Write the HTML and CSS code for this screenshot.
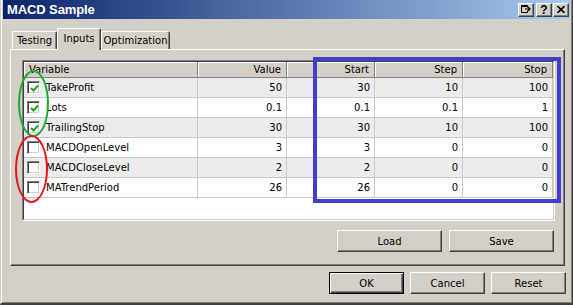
FILE: index.html
```html
<!DOCTYPE html>
<html>
<head>
<meta charset="utf-8">
<title>MACD Sample</title>
<link rel="stylesheet" href="styles.css">
</head>
<body>
<div class="window">
  <div class="titlebar">
    <span class="title">MACD Sample</span>
    <div class="tb-buttons">
      <div class="tb-btn">
        <svg width="10" height="9" viewBox="0 0 10 9"><path d="M0.5 1.5 H6.5 M0.5 0.5 H6.5 M0.5 0.5 V7.5 H6.5 V5.5 M6.5 0.5 V2.5" fill="none" stroke="#000" stroke-width="1"/><path d="M4 4 H8 M7 2 L9 4 L7 6" fill="none" stroke="#000" stroke-width="1.2"/></svg>
      </div>
      <div class="tb-btn help">?</div>
      <div class="tb-btn">
        <svg width="8" height="7" viewBox="0 0 8 7"><path d="M0.5 0 L7.5 7 M7.5 0 L0.5 7" stroke="#000" stroke-width="1.6"/></svg>
      </div>
    </div>
  </div>
  <div class="client">
    <div class="tabs">
      <div class="tab t-testing">Testing</div>
      <div class="tab t-inputs active">Inputs</div>
      <div class="tab t-opt">Optimization</div>
    </div>
    <div class="panel">
      <div class="list">
        <div class="list-inner">
          <div class="row header">
            <div class="cell hc left">Variable</div>
            <div class="cell hc">Value</div>
            <div class="cell hc">Start</div>
            <div class="cell hc">Step</div>
            <div class="cell hc last">Stop</div>
          </div>
          <div class="row odd">
            <div class="cell left"><span class="cb checked"><svg width="9" height="9" viewBox="0 0 9 9"><path d="M1 4 L3.5 6.5 L8 1.5" fill="none" stroke="#21a021" stroke-width="2"/></svg></span>TakeProfit</div>
            <div class="cell">50</div><div class="cell">30</div><div class="cell">10</div><div class="cell last">100</div>
          </div>
          <div class="row">
            <div class="cell left"><span class="cb checked"><svg width="9" height="9" viewBox="0 0 9 9"><path d="M1 4 L3.5 6.5 L8 1.5" fill="none" stroke="#21a021" stroke-width="2"/></svg></span>Lots</div>
            <div class="cell">0.1</div><div class="cell">0.1</div><div class="cell">0.1</div><div class="cell last">1</div>
          </div>
          <div class="row odd">
            <div class="cell left"><span class="cb checked"><svg width="9" height="9" viewBox="0 0 9 9"><path d="M1 4 L3.5 6.5 L8 1.5" fill="none" stroke="#21a021" stroke-width="2"/></svg></span>TrailingStop</div>
            <div class="cell">30</div><div class="cell">30</div><div class="cell">10</div><div class="cell last">100</div>
          </div>
          <div class="row">
            <div class="cell left"><span class="cb"></span>MACDOpenLevel</div>
            <div class="cell">3</div><div class="cell">3</div><div class="cell">0</div><div class="cell last">0</div>
          </div>
          <div class="row odd">
            <div class="cell left"><span class="cb"></span>MACDCloseLevel</div>
            <div class="cell">2</div><div class="cell">2</div><div class="cell">0</div><div class="cell last">0</div>
          </div>
          <div class="row">
            <div class="cell left"><span class="cb"></span>MATrendPeriod</div>
            <div class="cell">26</div><div class="cell">26</div><div class="cell">0</div><div class="cell last">0</div>
          </div>
        </div>
      </div>
      <div class="panel-buttons">
        <div class="btn wide">Load</div>
        <div class="btn wide">Save</div>
      </div>
    </div>
    <div class="dialog-buttons">
      <div class="btn default">OK</div>
      <div class="btn">Cancel</div>
      <div class="btn">Reset</div>
    </div>
  </div>
  <div class="mark green"></div>
  <div class="mark red"></div>
  <div class="mark blue"></div>
</div>
</body>
</html>
```
FILE: styles.css
```css
* { box-sizing: border-box; }
html, body { margin: 0; padding: 0; }
body {
  width: 573px;
  height: 305px;
  overflow: hidden;
  background: #d4d0c8;
  font-family: "DejaVu Sans", Verdana, sans-serif;
  font-size: 10px;
  color: #000;
}
.window {
  position: relative;
  width: 573px;
  height: 305px;
  background: #d4d0c8;
  border-left: 1px solid #d4d0c8;
  border-right: 1px solid #404040;
  border-bottom: 2px solid #404040;
  box-shadow: inset 1px 0 #fff, inset -1px -1px #808080;
  padding: 0 2px 0 2px;
  display: flex;
  flex-direction: column;
}
.titlebar {
  height: 19px;
  background: linear-gradient(to right, #0a246a, #a6caf0);
  display: flex;
  align-items: center;
  justify-content: space-between;
  padding: 0 1px 0 4px;
}
.title {
  color: #fff;
  font-family: "Liberation Sans", Arial, sans-serif;
  font-weight: bold;
  font-size: 13px;
  letter-spacing: -0.1px;
}
.tb-buttons { display: flex; gap: 1px; margin-top: 1px; }
.tb-btn {
  width: 16px;
  height: 14px;
  background: #d4d0c8;
  border: 1px solid;
  border-color: #fff #404040 #404040 #fff;
  box-shadow: inset -1px -1px #808080;
  display: flex;
  align-items: center;
  justify-content: center;
  font-family: "Liberation Sans", Arial, sans-serif;
  font-weight: bold;
  font-size: 12px;
  line-height: 12px;
  padding-bottom: 1px;
}
.tb-btn.help { margin-left: 1px; }

.client {
  flex: 1;
  display: flex;
  flex-direction: column;
  padding: 9px 5px 0 7px;
}
.tabs {
  display: flex;
  align-items: flex-end;
  height: 21px;
  padding-left: 2px;
}
.tab {
  height: 18px;
  background: #d4d0c8;
  border-top: 1px solid #fff;
  border-left: 1px solid #fff;
  border-right: 1px solid #404040;
  box-shadow: inset -1px 0 #808080;
  border-radius: 2px 2px 0 0;
  display: flex;
  align-items: center;
  justify-content: center;
  padding-bottom: 1px;
}
.t-testing { width: 45px; }
.t-inputs { width: 44px; }
.t-opt { width: 69px; }
.tab.active {
  height: 22px;
  margin-bottom: -1px;
  position: relative;
  z-index: 1;
  padding-bottom: 3px;
}
.panel {
  height: 217px;
  border: 1px solid;
  border-color: #fff #404040 #404040 #fff;
  box-shadow: inset -1px -1px #808080;
  padding: 10px 9px 0 11px;
  display: flex;
  flex-direction: column;
}
.list {
  height: 161px;
  border: 1px solid;
  border-color: #808080 #fff #fff #808080;
}
.list-inner {
  height: 100%;
  border: 1px solid;
  border-color: #404040 #d4d0c8 #d4d0c8 #404040;
  background: #fff;
}
.row {
  display: grid;
  grid-template-columns: 174px 89px 88px 88px 90px;
  height: 20px;
}
.row.odd { background: #ececec; }
.cell {
  border-right: 1px solid #c8c8c8;
  border-bottom: 1px solid #c8c8c8;
  text-align: right;
  padding-right: 4px;
  line-height: 19px;
  white-space: nowrap;
}
.cell.left {
  text-align: left;
  padding-left: 3px;
  display: flex;
  align-items: center;
  gap: 6px;
}
.row.header { height: 16px; background: #d4d0c8; }
.hc {
  background: #d4d0c8;
  border-right: 1px solid #808080;
  border-bottom: 1px solid #808080;
  box-shadow: inset 1px 1px #fff;
  line-height: 15px;
  padding-right: 5px;
}
.hc.left { padding-left: 5px; display: block; }
.hc.last { padding-right: 5px; }
.cb {
  width: 13px;
  height: 13px;
  flex: none;
  background: #fff;
  border: 1px solid;
  border-color: #808080 #fff #fff #808080;
  box-shadow: inset 1px 1px #404040, inset -1px -1px #d4d0c8;
  display: flex;
  align-items: center;
  justify-content: center;
}
.cb svg { display: block; margin: 1px 0 0 1px; }

.panel-buttons {
  display: flex;
  justify-content: flex-end;
  gap: 7px;
  margin-top: 9px;
  padding-right: 1px;
}
.btn {
  height: 22px;
  width: 75px;
  background: #d4d0c8;
  border: 1px solid;
  border-color: #fff #404040 #404040 #fff;
  box-shadow: inset -1px -1px #808080;
  display: flex;
  align-items: center;
  justify-content: center;
}
.btn.wide { width: 105px; }
.btn.default {
  border: 1px solid #000;
  box-shadow: inset 1px 1px #fff, inset -1px -1px #404040, inset -2px -2px #808080;
}
.dialog-buttons {
  display: flex;
  justify-content: flex-end;
  gap: 6px;
  margin-top: 6px;
  margin-right: -1px;
}
.mark {
  position: absolute;
  pointer-events: none;
}
.mark.green {
  left: 17px;
  top: 70px;
  width: 31px;
  height: 67px;
  border: 2px solid #22a83a;
  border-radius: 50%;
}
.mark.red {
  left: 14px;
  top: 135px;
  width: 33px;
  height: 68px;
  border: 2px solid #e8141c;
  border-radius: 50%;
}
.mark.blue {
  left: 312px;
  top: 57px;
  width: 248px;
  height: 146px;
  border: 4px solid #3f3fcc;
}
```
